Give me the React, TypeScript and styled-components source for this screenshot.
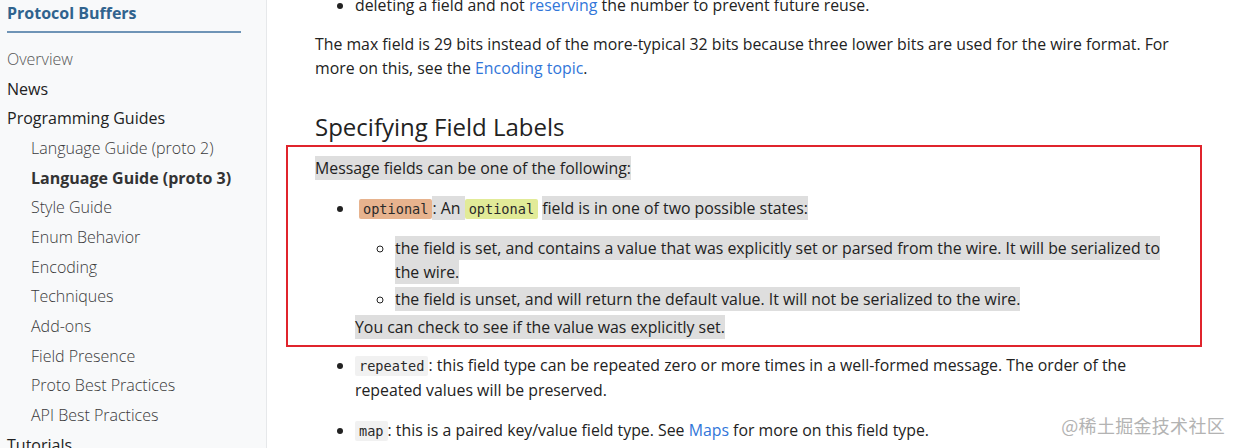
import React from "react";
import styled, { createGlobalStyle } from "styled-components";

const Global = createGlobalStyle`
  html, body { margin: 0; padding: 0; background: #fff; }
  body {
    font-family: "Open Sans", "Noto Sans", sans-serif;
    color: #222;
    overflow: hidden;
    height: 448px;
  }
`;

const Page = styled.div`
  position: relative;
  display: flex;
  width: 1240px;
  height: 448px;
  overflow: hidden;
`;

const Sidebar = styled.nav`
  flex: 0 0 267px;
  background: #f8f9fa;
  border-right: 1px solid #e6e8ea;
  padding: 1px 25px 0 7px;
  box-sizing: border-box;
`;

const Brand = styled.div`
  font-size: 16px;
  line-height: 24px;
  font-weight: 700;
  color: #30638e;
  padding-bottom: 6px;
  border-bottom: 2px solid #6f94b6;
  margin-bottom: 11px;
`;

const NavItem = styled.div<{ $sub?: boolean; $active?: boolean; $muted?: boolean }>`
  font-size: 16px;
  line-height: 24px;
  padding: 2.85px 0 2.85px ${(p) => (p.$sub ? "24px" : "0")};
  white-space: nowrap;
  font-weight: ${(p) => (p.$active ? 700 : p.$sub || p.$muted ? 300 : 400)};
  color: ${(p) => (p.$active ? "#333" : p.$sub ? "#3a3a3a" : p.$muted ? "#555" : "#222")};
`;

const Main = styled.main`
  flex: 1;
  padding: 0 67px 0 48px;
  font-size: 15.85px;
  line-height: 24px;
  color: #222;
`;

const List = styled.ul<{ $nested?: boolean; $top?: number; $bottom?: number }>`
  margin: ${(p) => p.$top ?? 0}px 0 ${(p) => p.$bottom ?? 0}px 0;
  padding-left: 40px;
  list-style: ${(p) => (p.$nested ? "circle" : "disc")};
`;

const Item = styled.li<{ $gap?: number }>`
  margin-bottom: ${(p) => p.$gap ?? 0}px;
`;

const Para = styled.p<{ $bottom?: number }>`
  margin: 0 0 ${(p) => p.$bottom ?? 0}px 0;
`;

const Link = styled.a`
  color: #3176d9;
  text-decoration: none;
`;

const Heading = styled.h2`
  font-size: 24px;
  line-height: 29px;
  font-weight: 400;
  color: #222;
  margin: 32px 0 4px 0;
`;

const RedBox = styled.section`
  border: 2px solid #e0242c;
  margin: 0 -29px 0 -29px;
  padding: 9px 27px 6px 27px;
`;

const Mark = styled.span`
  background: #dedede;
  padding: 1px 0;
`;

const Code = styled.code<{ $tone?: "orange" | "lime" | "plain"; $lead?: number }>`
  font-family: "DejaVu Sans Mono", "Liberation Mono", monospace;
  font-size: 13.6px;
  padding: 2px 4px;
  margin-left: ${(p) => p.$lead ?? 0}px;
  border-radius: 2px;
  background: ${(p) =>
    p.$tone === "orange" ? "#e7b38e" : p.$tone === "lime" ? "#e2eb98" : "#f1f1f1"};
  color: #2a2a2a;
`;

const Watermark = styled.div`
  position: absolute;
  right: 15px;
  bottom: 13px;
  font-family: "Noto Sans CJK SC", "Noto Sans", sans-serif;
  font-size: 18px;
  line-height: 20px;
  color: #b3b3b3;
  letter-spacing: 0.3px;
  text-shadow: 0 0 1px #fff;
`;

const subNav = [
  "Language Guide (proto 2)",
  "Language Guide (proto 3)",
  "Style Guide",
  "Enum Behavior",
  "Encoding",
  "Techniques",
  "Add-ons",
  "Field Presence",
  "Proto Best Practices",
  "API Best Practices",
];

export default function App() {
  return (
    <>
      <Global />
      <Page>
        <Sidebar>
          <Brand>Protocol Buffers</Brand>
          <NavItem $muted>Overview</NavItem>
          <NavItem>News</NavItem>
          <NavItem>Programming Guides</NavItem>
          {subNav.map((s) => (
            <NavItem key={s} $sub $active={s === "Language Guide (proto 3)"}>
              {s}
            </NavItem>
          ))}
          <NavItem>Tutorials</NavItem>
        </Sidebar>
        <Main>
          <List $top={-7} $bottom={15}>
            <Item>
              deleting a field and not <Link>reserving</Link> the number to prevent future reuse.
            </Item>
          </List>
          <Para>
            The max field is 29 bits instead of the more-typical 32 bits because three lower bits
            are used for the wire format. For more on this, see the <Link>Encoding topic</Link>.
          </Para>
          <Heading>Specifying Field Labels</Heading>
          <RedBox>
            <Para $bottom={16}>
              <Mark>Message fields can be one of the following:</Mark>
            </Para>
            <List>
              <Item>
                <Para $bottom={15}>
                  <Code $tone="orange" $lead={4}>optional</Code>
                  <Mark>: An </Mark> <Code $tone="lime">optional</Code>{" "}
                  <Mark>field is in one of two possible states:</Mark>
                </Para>
                <List $nested $bottom={4}>
                  <Item $gap={3}>
                    <Mark>
                      the field is set, and contains a value that was explicitly set or parsed
                      from the wire. It will be serialized to the wire.
                    </Mark>
                  </Item>
                  <Item>
                    <Mark>
                      the field is unset, and will return the default value. It will not be
                      serialized to the wire.
                    </Mark>
                  </Item>
                </List>
                <Mark>You can check to see if the value was explicitly set.</Mark>
              </Item>
            </List>
          </RedBox>
          <List $top={6}>
            <Item $gap={16}>
              <Code>repeated</Code>: this field type can be repeated zero or more times in a
              well-formed message. The order of the repeated values will be preserved.
            </Item>
            <Item>
              <Code>map</Code>: this is a paired key/value field type. See <Link>Maps</Link> for
              more on this field type.
            </Item>
          </List>
        </Main>
        <Watermark>@稀土掘金技术社区</Watermark>
      </Page>
    </>
  );
}
